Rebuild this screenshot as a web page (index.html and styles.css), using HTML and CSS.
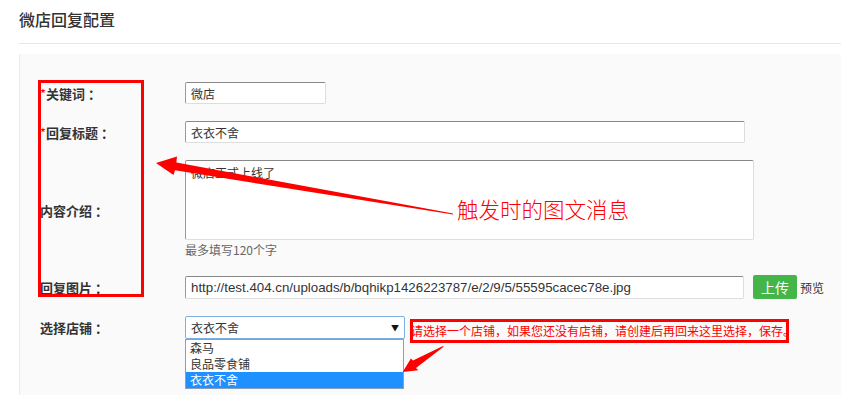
FILE: index.html
```html
<!DOCTYPE html>
<html lang="zh-CN">
<head>
  <meta charset="UTF-8">
  <title>微店回复配置</title>
  <link rel="stylesheet" href="styles.css">
</head>
<body>
  <div class="header">
    <h1>微店回复配置</h1>
  </div>

  <div class="panel">
    <div class="label-mark"></div>

    <div class="row">
      <div class="label"><span class="req">*</span>关键词<span class="colon">：</span></div>
      <input class="text-input short" type="text" value="微店">
    </div>

    <div class="row">
      <div class="label"><span class="req">*</span>回复标题<span class="colon">：</span></div>
      <input class="text-input title-input" type="text" value="衣衣不舍">
    </div>

    <div class="row row-top">
      <div class="label label-area">内容介绍<span class="colon">：</span></div>
      <div class="field">
        <textarea class="text-area">微店正式上线了</textarea>
        <div class="hint">最多填写120个字</div>
      </div>
    </div>

    <div class="row">
      <div class="label">回复图片<span class="colon">：</span></div>
      <input class="text-input pic-input" type="text" value="http://test.404.cn/uploads/b/bqhikp1426223787/e/2/9/5/55595cacec78e.jpg">
      <button class="upload-btn">上传</button>
      <span class="preview">预览</span>
    </div>

    <div class="row row-top">
      <div class="label label-select">选择店铺<span class="colon">：</span></div>
      <div class="select-wrap">
        <div class="select-box">
          <span>衣衣不舍</span>
          <span class="caret">▼</span>
        </div>
        <ul class="options">
          <li>森马</li>
          <li>良品零食铺</li>
          <li class="active">衣衣不舍</li>
        </ul>
      </div>
      <div class="shop-tip">请选择一个店铺，如果您还没有店铺，请创建后再回来这里选择，保存。</div>
    </div>
  </div>

  <!-- 标注 -->
  <div class="note-text">触发时的图文消息</div>
  <svg class="notes" width="841" height="395" viewBox="0 0 841 395">
    <polygon fill="#ff0000" points="156,163 177,156.5 176.4,162.5 453,213.5 453,214.6 175,170.3 173.5,175"/>
    <polygon fill="#ff0000" points="402.7,372 410.9,358.4 413,360.5 443,346 443.6,346.8 416,368 418.3,370.2"/>
  </svg>
</body>
</html>
```

FILE: styles.css
```css
* {
  margin: 0;
  padding: 0;
  box-sizing: border-box;
  font-family: "Noto Sans CJK SC", "Liberation Sans", sans-serif;
}

body {
  background: #fff;
  color: #333;
  width: 841px;
  height: 395px;
  overflow: hidden;
  position: relative;
}

.header {
  margin-left: 19px;
  padding-top: 9px;
  height: 44px;
  border-bottom: 1px solid #e6e6e6;
}

.header h1 {
  font-size: 16px;
  line-height: 20px;
  font-weight: 500;
  color: #333;
}

.panel {
  position: relative;
  margin: 10px 0 0 19px;
  height: 341px;
  padding: 28px 0 0 20px;
  background: #fafafa;
  border-left: 1px solid #ebebeb;
}

.label-mark {
  position: absolute;
  left: 18px;
  top: 26px;
  width: 106px;
  height: 217px;
  border: 3px solid #ff0000;
}

.row {
  display: flex;
  align-items: center;
  margin-bottom: 17px;
}

.row-top {
  align-items: flex-start;
}

.label {
  width: 145px;
  font-size: 13px;
  font-weight: bold;
  color: #333;
}

.colon {
  margin-left: 3px;
}

.req {
  color: #e00;
  font-weight: normal;
}

.label-area {
  margin-top: 41px;
}

.label-select {
  margin-top: 2px;
}

.text-input {
  height: 22px;
  padding: 0 5px;
  font-size: 12px;
  color: #333;
  background: #fff;
  border: 1px solid #ddd;
  border-top-color: #888;
  border-left-color: #999;
  border-radius: 2px;
  outline: none;
}

.short {
  width: 141px;
}

.title-input {
  width: 560px;
}

.field {
  display: flex;
  flex-direction: column;
}

.text-area {
  width: 569px;
  height: 80px;
  padding: 3px 5px;
  font-size: 12px;
  color: #333;
  background: #fff;
  border: 1px solid #ddd;
  border-top-color: #888;
  border-left-color: #999;
  border-radius: 2px;
  resize: none;
  outline: none;
}

.hint {
  margin-top: 2px;
  font-size: 12px;
  line-height: 16px;
  color: #666;
}

.pic-input {
  width: 559px;
  height: 23px;
  font-family: "Liberation Sans", "Noto Sans CJK SC", sans-serif;
  font-size: 13.3px;
}

.upload-btn {
  margin-left: 9px;
  width: 44px;
  height: 24px;
  background: #44b549;
  color: #fff;
  border: none;
  border-radius: 2px;
  font-size: 14px;
}

.preview {
  margin-left: 3px;
  font-size: 12px;
  color: #333;
}

.select-wrap {
  position: relative;
  width: 220px;
}

.select-box {
  display: flex;
  justify-content: space-between;
  align-items: center;
  height: 23px;
  padding: 0 5px 0 5px;
  background: #fff;
  border: 1px solid #7eaee8;
  border-radius: 2px;
  font-size: 12px;
  color: #333;
}

.caret {
  font-size: 8px;
  color: #111;
}

.options {
  position: absolute;
  top: 23px;
  left: 0;
  width: 219px;
  list-style: none;
  background: #fff;
  border: 1px solid #8a9fba;
  font-size: 12px;
  line-height: 16px;
  color: #333;
}

.options li {
  padding-left: 4px;
}

.options li.active {
  background: #1e90ff;
  color: #fff;
}

.shop-tip {
  margin: 3px 0 0 5px;
  width: 379px;
  height: 24px;
  border: 3px solid #ff0000;
  font-size: 12px;
  line-height: 18px;
  color: #f00;
  white-space: nowrap;
  text-indent: -2px;
}

.note-text {
  position: absolute;
  left: 457px;
  top: 196px;
  font-size: 21.5px;
  line-height: 26px;
  font-weight: 300;
  color: #ff0000;
}

.notes {
  position: absolute;
  left: 0;
  top: 0;
  pointer-events: none;
}
```
